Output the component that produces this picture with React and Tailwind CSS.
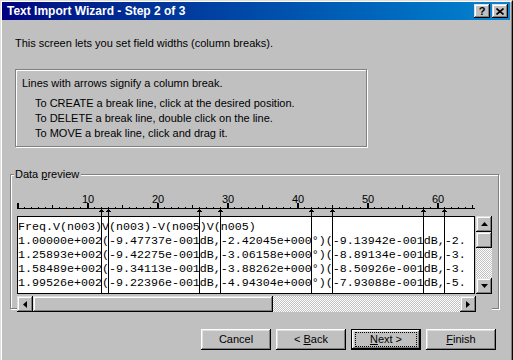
import React from 'react';

const raised = 'shadow-[inset_-1px_-1px_0_#000,inset_1px_1px_0_#dfdfdf,inset_-2px_-2px_0_#808080,inset_2px_2px_0_#fff]';
const pushBevel = 'shadow-[inset_-1px_-1px_0_#000,inset_1px_1px_0_#fff,inset_-2px_-2px_0_#808080,inset_2px_2px_0_#dfdfdf]';
const checker = 'bg-[image:repeating-conic-gradient(#fff_0_25%,#c0c0c0_0_50%)] bg-[length:2px_2px]';
const etched = 'border border-[#808080] shadow-[inset_1px_1px_0_#fff,1px_1px_0_#fff]';

const rows = [
    'Freq.V(n003)V(n003)-V(n005)V(n005)',
    '1.00000e+002(-9.47737e-001dB,-2.42045e+000°)(-9.13942e-001dB,-2.',
    '1.25893e+002(-9.42275e-001dB,-3.06158e+000°)(-8.89134e-001dB,-3.',
    '1.58489e+002(-9.34113e-001dB,-3.88262e+000°)(-8.50926e-001dB,-3.',
    '1.99526e+002(-9.22396e-001dB,-4.94304e+000°)(-7.93088e-001dB,-5.',
];

const breaks = [12, 13, 26, 29, 42, 45, 58, 61];
const ticks = Array.from({ length: 66 }, (_, n) => n);

function Arrow({ dir }) {
    const vertical = dir === 'up' || dir === 'down';
    const points = {
        up: '0,4 3.5,0 7,4',
        down: '0,0 7,0 3.5,4',
        left: '4,0 4,7 0,3.5',
        right: '0,0 0,7 4,3.5',
    }[dir];
    return (
        <svg width={vertical ? 7 : 4} height={vertical ? 4 : 7} viewBox={vertical ? '0 0 7 4' : '0 0 4 7'}>
            <polygon points={points} fill="#000" />
        </svg>
    );
}

function ScrollButton({ dir }) {
    return (
        <div className={`w-[16px] h-[16px] shrink-0 flex items-center justify-center bg-[#c0c0c0] ${raised}`}>
            <Arrow dir={dir} />
        </div>
    );
}

function Ruler() {
    return (
        <div className="relative w-[458px] h-[23px]">
            {[10, 20, 30, 40, 50, 60].map((n) => (
                <span
                    key={n}
                    className="absolute top-[1px] -translate-x-1/2 text-[11px] leading-[11px]"
                    style={{ left: 7 * n + 1 }}
                >
                    {n}
                </span>
            ))}
            <svg className="absolute left-0 top-0" width="458" height="23" shapeRendering="crispEdges">
                <rect x="0" y="15" width="458" height="1" fill="#000" />
                {ticks.map((n) =>
                    n % 10 === 0 ? (
                        <rect key={n} x={7 * n} y="10" width="2" height="5" fill="#000" />
                    ) : n % 5 === 0 ? (
                        <rect key={n} x={7 * n} y="12" width="1" height="3" fill="#000" />
                    ) : (
                        <rect key={n} x={7 * n} y="14" width="1" height="1" fill="#000" />
                    )
                )}
                {breaks.map((k) => (
                    <g key={k}>
                        <polygon points={`${7 * k - 2.5},19 ${7 * k + 0.5},16 ${7 * k + 3.5},19`} fill="#000" />
                        <rect x={7 * k} y="19" width="1" height="4" fill="#000" />
                    </g>
                ))}
            </svg>
        </div>
    );
}

function Button({ children, isDefault }) {
    return (
        <button
            className={`relative w-[70px] h-[21px] bg-[#c0c0c0] text-[11px] leading-none flex items-center justify-center ${pushBevel} ${isDefault ? 'border border-black' : ''}`}
        >
            {isDefault && <span className="absolute left-[3px] right-[3px] top-[2px] bottom-[2px] border border-dotted border-black" />}
            <span className="whitespace-pre">{children}</span>
        </button>
    );
}

export default function App() {
    return (
        <div className="w-[513px] h-[360px] overflow-hidden bg-[#c0c0c0] border-l border-t border-r border-l-[#dfdfdf] border-t-[#dfdfdf] border-r-black font-['Liberation_Sans',Arial,sans-serif] text-[11px] text-black">
            <div className="h-full border-l border-t border-r border-l-white border-t-white border-r-[#808080] pr-px">
                <div className="h-[18px] flex items-center justify-between pl-[5px] pr-[2px] bg-linear-to-r from-[#000080] to-[#1084d0]">
                    <span className="text-white font-bold text-[12px] leading-none">Text Import Wizard - Step 2 of 3</span>
                    <div className="flex gap-[2px]">
                        <div className={`w-[16px] h-[14px] flex items-center justify-center bg-[#c0c0c0] ${raised}`}>
                            <span className="font-bold text-[11px] leading-none">?</span>
                        </div>
                        <div className={`w-[16px] h-[14px] flex items-center justify-center bg-[#c0c0c0] ${raised}`}>
                            <svg width="8" height="7" viewBox="0 0 8 7">
                                <path d="M0.5 0.5 L7.5 6.5 M7.5 0.5 L0.5 6.5" stroke="#000" strokeWidth="1.6" />
                            </svg>
                        </div>
                    </div>
                </div>

                <p className="mt-[17px] ml-[13px] leading-[13px]">This screen lets you set field widths (column breaks).</p>

                <div className={`mt-[19px] ml-[13px] w-[352px] h-[78px] pt-[6px] pl-[6px] ${etched}`}>
                    <p className="leading-[14px]">Lines with arrows signify a column break.</p>
                    <div className="mt-[6px] pl-[13px] leading-[15px]">
                        <p>To CREATE a break line, click at the desired position.</p>
                        <p>To DELETE a break line, double click on the line.</p>
                        <p>To MOVE a break line, click and drag it.</p>
                    </div>
                </div>

                <div className={`relative mt-[27px] ml-[8px] w-[489px] h-[135px] pl-[6px] ${etched}`}>
                    <span className="absolute left-[3px] top-[-7px] pl-px pr-[2px] bg-[#c0c0c0] leading-[13px]">
                        Data <u>p</u>review
                    </span>
                    <div className="mt-[18px]">
                        <Ruler />
                        <div className="flex">
                            <div className="relative w-[458px] h-[78px] border border-black bg-white overflow-hidden pt-[3px] font-['Liberation_Mono','Courier_New',monospace] text-[11.67px] leading-[14px] whitespace-pre">
                                {rows.map((r) => (
                                    <div key={r}>{r}</div>
                                ))}
                                {breaks.map((k) => (
                                    <div key={k} className="absolute top-0 bottom-0 w-px bg-black" style={{ left: 7 * k - 1 }} />
                                ))}
                            </div>
                            <div className="ml-px w-[16px] h-[78px] flex flex-col">
                                <ScrollButton dir="up" />
                                <div className={`w-[16px] h-[16px] bg-[#c0c0c0] ${raised}`} />
                                <div className={`flex-1 ${checker}`} />
                                <ScrollButton dir="down" />
                            </div>
                        </div>
                        <div className="mt-[2px] flex">
                            <div className="w-[459px] h-[16px] flex">
                                <ScrollButton dir="left" />
                                <div className={`w-[240px] h-[16px] bg-[#c0c0c0] ${raised}`} />
                                <div className={`flex-1 ${checker}`} />
                                <ScrollButton dir="right" />
                            </div>
                            <div className="w-[16px] h-[16px] bg-[#c0c0c0]" />
                        </div>
                    </div>
                </div>

                <div className="mt-[20px] pr-[14px] flex justify-end gap-[5px]">
                    <Button>Cancel</Button>
                    <Button>
                        {'< '}<u>B</u>ack
                    </Button>
                    <Button isDefault>
                        <u>N</u>ext &gt;
                    </Button>
                    <Button>
                        <u>F</u>inish
                    </Button>
                </div>
            </div>
        </div>
    );
}
